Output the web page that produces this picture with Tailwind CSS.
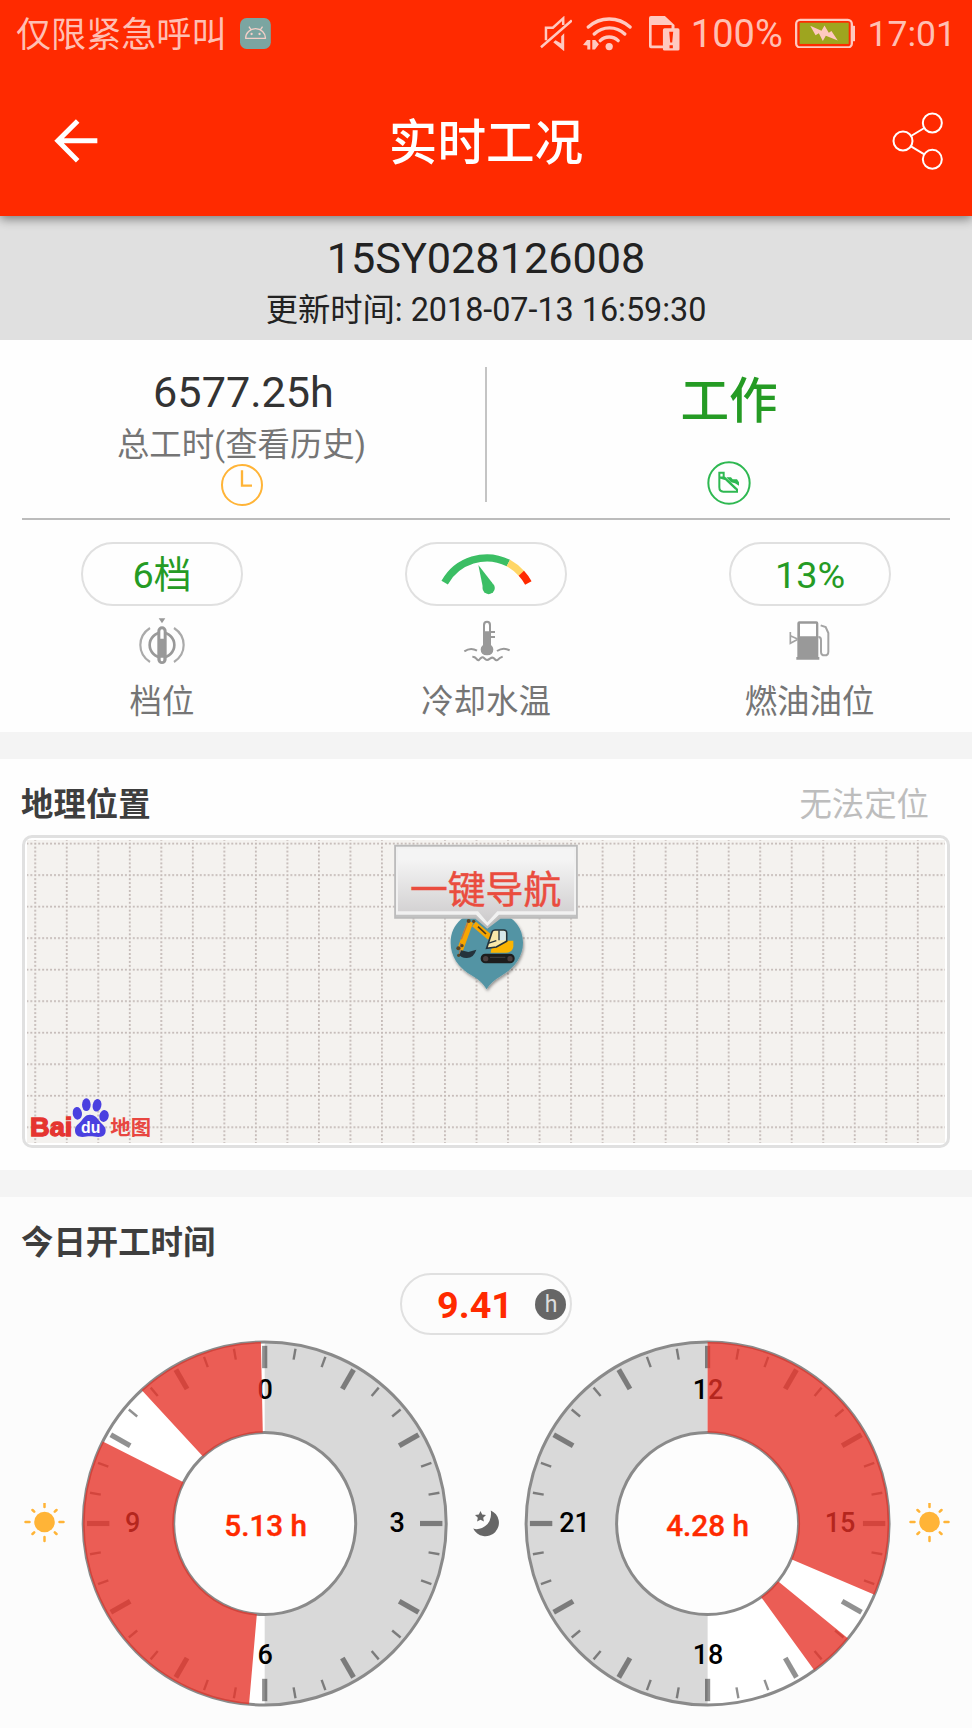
<!DOCTYPE html>
<html lang="zh-CN">
<head>
<meta charset="utf-8">
<title>实时工况</title>
<script src="https://cdn.jsdelivr.net/npm/@tailwindcss/browser@4"></script>
</head>
<body class="w-[972px] h-[1728px] overflow-hidden bg-[#fcfcfc] font-['Roboto','Noto_Sans_CJK_SC',sans-serif] text-[#222]">

<!-- shared dial parts -->
<svg class="hidden">
  <defs>
    <g id="quarter">
      <path d="M0-177.7V-155.3" stroke-width="5.2"/>
      <path d="M0-177.4V-166.4" stroke-width="2.4" transform="rotate(10)"/>
      <path d="M0-177.4V-166.4" stroke-width="2.4" transform="rotate(20)"/>
    </g>
    <g id="ticks" stroke="#000" stroke-opacity=".43">
      <use href="#quarter"/><use href="#quarter" transform="rotate(30)"/><use href="#quarter" transform="rotate(60)"/><use href="#quarter" transform="rotate(90)"/><use href="#quarter" transform="rotate(120)"/><use href="#quarter" transform="rotate(150)"/><use href="#quarter" transform="rotate(180)"/><use href="#quarter" transform="rotate(210)"/><use href="#quarter" transform="rotate(240)"/><use href="#quarter" transform="rotate(270)"/><use href="#quarter" transform="rotate(300)"/><use href="#quarter" transform="rotate(330)"/>
    </g>
    <g id="sun">
      <circle r="10.3" fill="#ffb437"/>
      <g stroke="#ffb437" stroke-width="2.5" stroke-linecap="round">
        <path d="M0-19V-15M0 15V19M-19 0H-15M15 0H19M-12-12L-10.3-10.3M12-12L10.3-10.3M-12 12L-10.3 10.3M12 12L10.3 10.3"/>
      </g>
    </g>
  </defs>
</svg>

<header class="relative z-10 h-[216px] bg-[#ff2a00] shadow-[0_3px_10px_rgba(0,0,0,0.45)]">
  <div class="flex h-[66px] items-center pl-4 pr-[16px] text-[#ffbfb3]">
    <span class="w-[225px] text-[35.1px] leading-[66px] pt-[3px]">仅限紧急呼叫</span>
    <svg class="w-[31px] h-[31px]" viewBox="723 51 93 93">
      <rect x="723" y="51" width="93" height="93" rx="20" fill="#7ba5a1"/>
      <path d="M740 112a30 29 0 0 1 60 0zM750 77l7 10M791 77l-7 10" fill="none" stroke="#f5cfc8" stroke-width="4" stroke-linejoin="round"/>
      <circle cx="758" cy="99" r="3.5" fill="#f5cfc8"/><circle cx="782" cy="99" r="3.5" fill="#f5cfc8"/>
    </svg>
    <svg class="ml-[269px] w-[33px] h-[35px]" viewBox="164 45 99 105">
      <path d="M182 118V80h21l31-28v20M167 139L260 58" fill="none" stroke="#ffc9c0" stroke-width="7.500"/>
      <path d="M237 97v54l-33-27 7-6 17 10v-22z" fill="#ffc9c0"/>
    </svg>
    <svg class="ml-[11px] w-[49px] h-[35px]" viewBox="296 45 147 105">
      <g fill="none" stroke="#ffc9c0" stroke-width="10" stroke-linecap="round"><path d="M312 78a94 94 0 0 1 126 0M330 99a66 66 0 0 1 92 0M348 119a39 39 0 0 1 54 0"/></g>
      <circle cx="375" cy="137" r="11" fill="#ffc9c0"/>
      <path d="M296 132l12-15h10v29h-9v-12zM324 117h9l11 13-12 16h-8z" fill="#ffc9c0"/>
    </svg>
    <svg class="ml-[17px] w-[31px] h-[35px]" viewBox="494 45 93 105">
      <path d="M500 45h42l29 27v14h-9V72h-60v62h35v8h-37q-6 0-6-6V51q0-6 6-6z" fill="#ffc9c0"/>
      <path fill-rule="evenodd" d="M541 82h40q5 0 5 5v58q0 4-5 4h-40q-5 0-5-4v-58q0-5 5-5zM555 92l3 33h6l3-33zM556 133v9h10v-9z" fill="#ffc9c0"/>
    </svg>
    <span class="ml-[11px] w-[92px] whitespace-nowrap text-[38px] leading-[66px] pt-px">100%</span>
    <svg class="ml-[12px] w-[61px] h-[30px]" viewBox="928 55 183 90">
      <rect x="931.500" y="60.500" width="168" height="83" rx="12" fill="none" stroke="#ffc9c0" stroke-width="7"/>
      <path d="M1102 78h4q4 0 4 4v39q0 4-4 4h-4z" fill="#ffc9c0"/>
      <rect x="942" y="69" width="148" height="64" fill="#9ea51f"/>
      <path d="M974 78l34 15 9-16 13 22 8-5 19 29-36-15-9 16-12-23-10 6z" fill="#ffc9c0"/>
    </svg>
    <span class="ml-[12px] whitespace-nowrap text-[35.6px] leading-[66px] pt-px">17:01</span>
  </div>
  <div class="grid h-[150px] grid-cols-[1fr_auto_1fr] items-center pl-[54px] pr-[28px] pb-px text-white">
    <svg class="w-[62px] h-[44px]" viewBox="162 356 186 132"><path d="M292 421.500H172M233 362L173.500 421.500 233 481" fill="none" stroke="#fff" stroke-width="15"/></svg>
    <h1 class="-ml-[26px] pt-[7px] text-[48.6px] leading-[60px] font-medium">实时工况</h1>
    <svg class="ml-auto w-[52px] h-[58px]" viewBox="1219 334 156 174"><g fill="none" stroke="#fff" stroke-width="6"><circle cx="1252" cy="421" r="28.500"/><circle cx="1340" cy="367" r="28.500"/><circle cx="1340" cy="476" r="28.500"/><path d="M1276 406L1316 382M1276 437L1316 461"/></g></svg>
  </div>
</header>

<section class="flex h-[124px] flex-col items-center bg-[#e0e0e0] pt-[18px] text-[#222]">
  <div class="text-[43.2px] leading-[50px]">15SY028126008</div>
  <div class="mt-[6px] text-[32.3px] leading-[40px]">更新时间: 2018-07-13 16:59:30</div>
</section>

<section class="h-[392px] bg-[#fefefe]">
  <div class="mx-[22px] flex h-[180px] border-b-2 border-[#bcbcbc]">
    <div class="flex w-[463px] flex-col items-center pt-[28px] pr-[24px]">
      <div class="pl-[4px] text-[43.2px] leading-[50px] text-[#333]">6577.25h</div>
      <div class="mt-[7px] text-[32.4px] leading-[40px] text-[#757575]">总工时(查看历史)</div>
      <svg class="-mt-[2px] w-[44px] h-[44px]" viewBox="658 759 132 132"><circle cx="724" cy="825" r="60" fill="none" stroke="#ffb437" stroke-width="6"/><path d="M724 781V827H754" fill="none" stroke="#ffb437" stroke-width="7"/></svg>
    </div>
    <div class="mt-[27px] h-[135px] w-[2px] bg-[#c4c4c4]"></div>
    <div class="flex flex-1 flex-col items-center pt-[32px] pl-[21px]">
      <div class="text-[48.6px] leading-[60px] font-medium text-[#259b24]">工作</div>
      <svg class="mt-[29px] w-[44px] h-[44px]" viewBox="663 754 132 132"><circle cx="729" cy="820" r="62" fill="none" stroke="#2eb851" stroke-width="6"/><path d="M700 803V789h13v18zM700 803v30q0 13 12 13h41v-7l-37-35zM716 806l34 32" fill="none" stroke="#2eb851" stroke-width="6"/><path d="M721 803h14l5 6h13l6 9v10l-12-7-12-3z" fill="#2eb851"/></svg>
    </div>
  </div>
  <div class="grid grid-cols-3 pt-[22px] text-[32.4px] text-[#757575]">
    <div class="flex flex-col items-center">
      <div class="flex h-[64px] w-[162px] items-center justify-center rounded-full border-2 border-[#e0e0e0] pt-[2px] text-[37.8px] leading-[50px] text-[#259b24]">6档</div>
      <svg class="mt-[10px] w-[50px] h-[50px]" viewBox="411 287 150 150">
        <path d="M476 294h20l-10 15z" fill="#999"/>
        <circle cx="486" cy="374" r="37" fill="none" stroke="#999" stroke-width="8"/>
        <rect x="475" y="321" width="22" height="107" rx="11" fill="#999" stroke="#999" stroke-width="6"/>
        <path d="M481 355v-22q0-6 5-6t5 6v22zM482 412h8v6q0 5-4 5t-4-5z" fill="#fff"/>
        <path d="M450 323Q421 342 421 374T450 425M522 323Q551 342 551 374T522 425" fill="none" stroke="#aaa" stroke-width="6.500"/>
      </svg>
      <div class="mt-[16px] leading-[40px]">档位</div>
    </div>
    <div class="flex flex-col items-center">
      <div class="flex h-[64px] w-[162px] items-center justify-center rounded-full border-2 border-[#e0e0e0]">
        <svg class="w-[94px] h-[45px]" viewBox="1318 95 282 135">
          <g fill="none" stroke-width="22"><path d="M1335 187A145 145 0 0 1 1526 128" stroke="#3bbe64"/><path d="M1526 128A145 145 0 0 1 1566 160" stroke="#ffd666"/><path d="M1565 159A145 145 0 0 1 1586 188" stroke="#ff2a00"/></g>
          <path d="M1436 134L1478 188 1450 203z" fill="#3bbe64"/><circle cx="1467" cy="203" r="18.500" fill="#3bbe64"/>
        </svg>
      </div>
      <svg class="mt-[10px] w-[50px] h-[50px]" viewBox="1383 287 150 150">
        <path d="M1449 374V313q0-12 12-12t12 12v61q7 5 7 13 0 18-19 18t-19-18q0-8 7-13z" fill="#999"/>
        <path d="M1455 333v-18q0-8 6-8t6 8v18z" fill="#fff"/>
        <g fill="none" stroke="#999" stroke-width="6"><path d="M1472 335h13M1472 350h13M1393 393q19-13 38-2M1491 392q19-13 38-2"/><path d="M1417 409q8 0 12 6t8 4q9-12 15-6t9 6 10-5 13 2 10 2 14-9"/></g>
      </svg>
      <div class="mt-[16px] leading-[40px]">冷却水温</div>
    </div>
    <div class="flex flex-col items-center">
      <div class="flex h-[64px] w-[162px] items-center justify-center rounded-full border-2 border-[#e0e0e0] pt-[2px] text-[37.8px] leading-[50px] text-[#259b24]">13%</div>
      <svg class="mt-[10px] w-[50px] h-[50px]" viewBox="2355 287 150 150">
        <path fill-rule="evenodd" d="M2392 410V309q0-6 6-6h51q6 0 6 6v101h3v8h-69v-8zM2400 310v38h48v-38z" fill="#999"/>
        <g fill="none" stroke="#a4a4a4" stroke-width="6"><path d="M2455 350q8 0 8 9v35q0 11 11 11t11-11v-56l-8-18-15-5"/><path d="M2371 335v34l20-11v-3l-20-9" stroke-width="5"/></g>
      </svg>
      <div class="mt-[16px] -ml-px leading-[40px]">燃油油位</div>
    </div>
  </div>
</section>

<section class="h-[438px] border-t-[27px] border-[#f4f4f4] bg-[#fefefe] px-[22px] pt-[26px]">
  <div class="flex justify-between pr-[21px] text-[32.4px] leading-[40px]">
    <h2 class="-ml-px font-bold text-[#3e3e3e]">地理位置</h2>
    <span class="text-[#bdbdbd]">无法定位</span>
  </div>
  <div class="relative mt-[10px] h-[313px] rounded-[10px] border-[3px] border-[#e0e0e0] bg-white p-[2px]">
    <svg class="h-full w-full" viewBox="27 840 918 303" preserveAspectRatio="none">
      <defs><pattern id="grid" x="34.300" y="842.700" width="31.520" height="31.520" patternUnits="userSpaceOnUse">
        <path d="M0 .9H31.520M.9 0V31.520" stroke="#c4bab7" stroke-width="1.800" stroke-dasharray="1.970"/>
      </pattern></defs>
      <rect x="27" y="840" width="918" height="303" fill="#f4f2ef"/>
      <rect x="27" y="840" width="918" height="303" fill="url(#grid)"/>
    </svg>
    <svg class="absolute left-[355px] -top-[8px] w-[220px] h-[170px]" viewBox="0 0 660 510">
      <defs>
        <linearGradient id="tip" x1="0" y1="0" x2="0" y2="1"><stop offset=".15" stop-color="#f4f4f4"/><stop offset="1" stop-color="#cdcbcc"/></linearGradient>
        <filter id="soft" x="-20%" y="-20%" width="140%" height="150%"><feDropShadow dx="3" dy="6" stdDeviation="5" flood-opacity=".4"/></filter>
      </defs>
      <path d="M320 478q-15-25-42-40c-45-26-66-60-66-100 0-58 46-96 108-96s109 38 109 96c0 40-23 74-66 100q-30 17-43 40z" fill="#5394a4" filter="url(#soft)"/>
      <path d="M282 282l48 40M271 275l-31 85" stroke="#f7a600" stroke-width="18"/>
      <path d="M264 276l-20 52M242 339l-3 35" stroke="#b9794a" stroke-width="4"/>
      <path d="M294 290l24 22" stroke="#4a3a20" stroke-width="5"/>
      <g fill="#5b4524"><circle cx="266" cy="273" r="6"/><circle cx="281" cy="274" r="5"/><circle cx="235" cy="355" r="6"/><circle cx="246" cy="347" r="5"/><circle cx="236" cy="376" r="5"/></g>
      <path d="M244 361l21 5 24-7q-8 26-30 25-17-1-21-10z" fill="#24333c"/>
      <path d="M334 356l42-24h24v18q-3 17-22 18h-46z" fill="#fbb400"/>
      <path d="M320 355l16-49q2-6 9-6h26q9 0 9 9v25l-31 17z" fill="#f8e8a9" stroke="#24333c" stroke-width="5"/>
      <path d="M357 303h16q4 0 4 5v23h-20z" fill="#d6e8ea"/><path d="M357 301v30M324 340l25-8" stroke="#24333c" stroke-width="4"/>
      <rect x="302" y="371" width="102" height="29" rx="14" fill="#1d1d1d"/><circle cx="317" cy="386" r="8" fill="#4c4141"/><circle cx="390" cy="386" r="8" fill="#4c4141"/><path d="M330 382h46" stroke="#444" stroke-width="3"/>
      <path d="M45 47H591V264H360L322 293 288 264H45z" fill="#c2c2c2" stroke="#bbb" stroke-width="5"/>
      <path d="M48 50H588V254H357L322 288 288 254H48z" fill="#f1f1f1"/>
      <path d="M54 56H582V244H352L322 277 294 244H54z" fill="url(#tip)"/>
      <text x="90" y="218" font-size="113.400" fill="#ea4c3e" stroke="#ea4c3e" stroke-width="1.500" font-family="Noto Sans CJK SC, sans-serif">一键导航</text>
    </svg>
    <svg class="absolute left-[2px] top-[257px] w-[127px] h-[45px] overflow-visible" viewBox="81 105 381 135">
      <g fill="#4a40e0"><ellipse cx="232" cy="160" rx="14" ry="19" transform="rotate(-8 232 160)"/><ellipse cx="259" cy="134" rx="13" ry="19"/><ellipse cx="291" cy="136" rx="13" ry="19" transform="rotate(12 291 136)"/><ellipse cx="312" cy="168" rx="14" ry="18" transform="rotate(12 312 168)"/>
      <path d="M270 164c14 0 22 10 29 20s18 15 18 27c0 17-11 20-22 20-10 0-16-2-25-2s-12 2-23 2c-12 0-22-5-22-20 0-14 11-18 18-27s13-20 27-20z"/></g>
      <g font-family="Liberation Sans, sans-serif" font-weight="700"><text x="90" y="228" font-size="80" fill="#e53530" stroke="#e53530" stroke-width="4" textLength="127" lengthAdjust="spacingAndGlyphs">Bai</text><text x="243" y="220" font-size="51" fill="#fff" textLength="58" lengthAdjust="spacingAndGlyphs">du</text></g>
      <text x="331" y="224" font-size="61" font-weight="700" fill="#e84640" font-family="Noto Sans CJK SC, sans-serif">地图</text>
    </svg>
  </div>
</section>

<section class="border-t-[27px] border-[#f4f4f4] pt-[26px]">
  <h2 class="px-[21px] text-[32.4px] leading-[40px] font-bold text-[#3e3e3e]">今日开工时间</h2>
  <div class="mx-auto mt-[10px] flex h-[62px] w-[172px] items-center rounded-full border-2 border-[#e0e0e0] pl-[35px] pr-[4px]">
    <span class="pt-[2px] text-[37.8px] leading-[50px] font-bold text-[#ff2a00]">9.41</span>
    <span class="ml-auto flex h-[31px] w-[31px] items-center justify-center rounded-full bg-[#666] pl-px text-[23px] leading-none text-[#ddd]">h</span>
  </div>
  <div class="mt-[5px] flex h-[367px] items-center pl-[24px]">
    <svg class="w-[41px] h-[41px]" viewBox="-20.500 -19 41 41"><use href="#sun"/></svg>
    <svg class="ml-[16px] w-[367px] h-[367px] shrink-0" viewBox="-183.700 -183.500 367 367">
      <circle r="181.500" fill="#fff"/>
      <path d="M0-181.500A181.500 181.500 0 0 1 0 181.500z" fill="#d9d9d9"/>
      <circle r="91" fill="#fdfdfd"/>
      <g fill="none" stroke="#8a8a8a" stroke-width="3"><circle r="181.500"/><circle r="91"/></g>
      <use href="#ticks"/>
      <g font-size="27" font-weight="500" text-anchor="middle" fill="#000"><text x=".5" y="-124.500">0</text><text x="132.500" y="8.500">3</text><text x=".5" y="140.500">6</text><text x="-132" y="8.500">9</text></g>
      <g fill="#e53026" fill-opacity=".785">
        <path d="M-15.660 180.820A181.500 181.500 0 0 1-161.860-82.120L-81.160-41.170A91 91 0 0 0-7.850 90.660z"/>
        <path d="M-123.090-133.390A181.500 181.500 0 0 1-3.800-181.460L-1.910-90.980A91 91 0 0 0-61.710-66.880z"/>
      </g>
      <text x="1" y="12.500" font-size="29.700" font-weight="500" text-anchor="middle" fill="#ff2a00" stroke="#ff2a00" stroke-width=".4">5.13 h</text>
    </svg>
    <svg class="w-[76px] h-[40px] shrink-0" viewBox="-38 -20 76 40">
      <path d="M4.800-13.600A13.500 13.500 0 1 1-12.800 4.500Q-9 6-4 4Q6.500-1 4.800-13.600z" fill="#666"/>
      <path d="M-5.500-13l1.700 3.500 3.800.5-2.800 2.700.7 3.800-3.400-1.800-3.400 1.800.7-3.800-2.800-2.700 3.800-.5z" fill="#666"/>
    </svg>
    <svg class="w-[367px] h-[367px] shrink-0" viewBox="-183.600 -183.500 367 367">
      <circle r="181.500" fill="#fff"/>
      <path d="M0-181.500A181.500 181.500 0 0 0 0 181.500z" fill="#d9d9d9"/>
      <circle r="91" fill="#fdfdfd"/>
      <g fill="none" stroke="#8a8a8a" stroke-width="3"><circle r="181.500"/><circle r="91"/></g>
      <use href="#ticks"/>
      <g font-size="27" font-weight="500" text-anchor="middle" fill="#000"><text x=".5" y="-124.500">12</text><text x="132.500" y="8.500">15</text><text x=".5" y="140.500">18</text><text x="-133" y="8.500">21</text></g>
      <g fill="#e53026" fill-opacity=".785">
        <path d="M0-181.500A181.500 181.500 0 0 1 166.950 71.210L83.700 35.700A91 91 0 0 0 0-91z"/>
        <path d="M140.450 114.960A181.500 181.500 0 0 1 106.680 146.840L53.490 73.620A91 91 0 0 0 70.420 57.640z"/>
      </g>
      <text x="0" y="12.500" font-size="29.700" font-weight="500" text-anchor="middle" fill="#ff2a00" stroke="#ff2a00" stroke-width=".4">4.28 h</text>
    </svg>
    <svg class="ml-[18px] w-[41px] h-[41px]" viewBox="-20.500 -19 41 41"><use href="#sun"/></svg>
  </div>
</section>
</body>
</html>
